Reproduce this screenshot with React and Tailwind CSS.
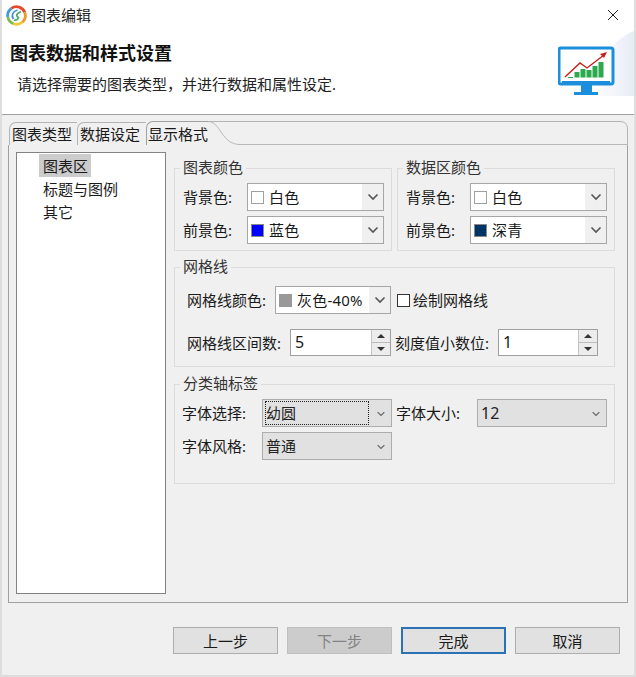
function Chevron({ className }) {
  return (
    <svg className={className} width="12" height="8" viewBox="0 0 12 8" fill="none" stroke="currentColor">
      <path d="M1.5 1.5L6 6L10.5 1.5" strokeWidth="1.6" />
    </svg>
  );
}

function ColorCombo({ swatch, label, className }) {
  return (
    <div className={`flex items-stretch h-[28px] border border-[#a6a6a6] bg-white ${className}`}>
      <div className="flex flex-1 items-center pl-[3px] min-w-0">
        <span className={`w-[13px] h-[13px] mr-[5px] border ${swatch}`}></span>
        <span className="whitespace-nowrap tracking-[0.2px]">{label}</span>
      </div>
      <div className="flex w-[21px] items-center justify-center bg-[#f0f0f0] text-[#555555]">
        <Chevron />
      </div>
    </div>
  );
}

function ColorRow({ text, swatch, label }) {
  return (
    <div className="flex items-center">
      <span className="w-[64px] whitespace-nowrap">{text}</span>
      <ColorCombo swatch={swatch} label={label} className="w-[137px]" />
    </div>
  );
}

function Spinner({ value, className }) {
  return (
    <div className={`flex items-stretch h-[27px] border border-[#a0a0a0] bg-white ${className}`}>
      <span className="flex-1 pl-[4px] text-[16px] leading-[25px]">{value}</span>
      <div className="flex flex-col w-[19px] border-l border-[#c4c4c4] bg-[#ececec]">
        <div className="flex flex-1 items-center justify-center border-b border-[#bcbcbc]">
          <svg width="8" height="4" viewBox="0 0 8 4"><path d="M4 0L8 4H0z" fill="#333333" /></svg>
        </div>
        <div className="flex flex-1 items-center justify-center">
          <svg width="8" height="4" viewBox="0 0 8 4"><path d="M0 0H8L4 4z" fill="#333333" /></svg>
        </div>
      </div>
    </div>
  );
}

function Select({ value, focused, className }) {
  return (
    <div className={`relative flex items-center h-[28px] border border-[#adadad] bg-[#e1e1e1] ${className}`}>
      <span className="pl-[3px] text-[#222222]">{value}</span>
      {focused && <span className="absolute left-[2px] top-[1px] w-[104px] h-[24px] border border-dotted border-[#222222]"></span>}
      <Chevron className="absolute right-[4px] top-[10px] text-[#666666] scale-75" />
    </div>
  );
}

function Group({ title, className, children }) {
  return (
    <fieldset className={`border border-[#dcdcdc] ${className}`}>
      <legend className="ml-[5px] px-[3px] leading-[20px] text-[#333333]">
        <span className="relative -top-px">{title}</span>
      </legend>
      {children}
    </fieldset>
  );
}

function FooterButton({ children, className }) {
  return (
    <button className={`flex w-[105px] h-[27px] items-center justify-center border ${className}`}>
      {children}
    </button>
  );
}

export default function App() {
  return (
    <div className="flex flex-col w-[636px] h-[677px] overflow-hidden border-x-2 border-b-2 border-[#dedede] bg-[#f0f0f0] text-[15px] leading-[20px] text-[#1a1a1a] font-['Noto_Sans','Noto_Sans_CJK_SC',sans-serif]">
      {/* title bar */}
      <div className="flex h-[30px] items-center justify-between bg-white pl-[4px] pr-[15px]">
        <div className="flex items-center">
          <svg width="21" height="21" viewBox="0 0 21 21" fill="none">
            <path d="M1.83 12.03A8.8 8.8 0 0 1 5.45 3.3" stroke="#3f9bd6" strokeWidth="2.8" />
            <path d="M5.45 3.3A8.8 8.8 0 0 1 18.77 7.5" stroke="#e6492e" strokeWidth="2.8" />
            <path d="M18.77 7.5A8.8 8.8 0 0 1 16.16 17.24" stroke="#f09a2e" strokeWidth="2.8" />
            <path d="M16.16 17.24A8.8 8.8 0 0 1 7.5 18.77" stroke="#eecb35" strokeWidth="2.8" />
            <path d="M7.5 18.77A8.8 8.8 0 0 1 1.83 12.03" stroke="#7dbb4a" strokeWidth="2.8" />
            <path d="M11.5 5C6.5 6.5 5 10.5 7.5 14" stroke="#4a8fd0" strokeWidth="1.8" />
            <path d="M15 6.5C11 8.5 9 10.5 12.5 12.5C11.5 15 9.5 15.5 8 15" stroke="#49ad6a" strokeWidth="1.7" />
          </svg>
          <span className="ml-[4px] text-[#222222]">图表编辑</span>
        </div>
        <svg width="12" height="12" viewBox="0 0 12 12" stroke="#222222" strokeWidth="1">
          <path d="M1 1L11 11M11 1L1 11" />
        </svg>
      </div>

      {/* banner */}
      <div className="flex h-[85px] justify-between border-b border-[#a0a0a0] bg-white pl-[8px]">
        <div>
          <h1 className="mt-[12px] text-[18px] leading-[22px] font-bold text-[#111111]">图表数据和样式设置</h1>
          <p className="mt-[10px] ml-[7px] text-[#222222]">请选择需要的图表类型，并进行数据和属性设定.</p>
        </div>
        <svg width="76" height="66" viewBox="558 30 76 66" className="shrink-0">
          <defs>
            <linearGradient id="fade" x1="0" x2="1" y1="0" y2="0">
              <stop offset="0" stopColor="#ffffff" />
              <stop offset="1" stopColor="#e8ecf6" />
            </linearGradient>
          </defs>
          <path d="M592 96C596 62 612 40 634 31V96z" fill="url(#fade)" />
          <rect x="559" y="48" width="54" height="36" rx="2" fill="#ffffff" stroke="#1b8fdc" strokeWidth="3" />
          <path d="M562 81H610V84H562z" fill="#1b8fdc" />
          <path d="M581 85H592V92H598V95H574V92H581z" fill="#1b8fdc" />
          <path d="M568 77H573V78H568z" fill="#2da94f" />
          <path d="M574.5 72H579.5V77.5H574.5zM580.5 69H585.5V77.5H580.5zM586.5 70H591.5V77.5H586.5zM592.5 66H597.5V77.5H592.5zM598.5 62H603.5V77.5H598.5z" fill="#2da94f" />
          <path d="M565 77L580 63L587 68L604 55" fill="none" stroke="#c8201c" strokeWidth="1.4" />
          <path d="M607 52L600 54L604 58z" fill="#c8201c" />
        </svg>
      </div>

      {/* tab folder */}
      <div className="relative mt-[6px] ml-[6px] w-[620px]">
        <div className="flex h-[24px] items-end pl-[1px]">
          <div className="h-[23px] w-[68px] rounded-tl-[7px] border-l border-t border-[#b4b4b4] pl-[2px] leading-[23px] whitespace-nowrap">图表类型</div>
          <div className="h-[23px] w-[69px] rounded-tl-[7px] border-l border-t border-[#b4b4b4] pl-[2px] leading-[23px] whitespace-nowrap">数据设定</div>
          <div className="h-[24px] w-[62px] rounded-tl-[7px] border-l border-t border-[#a0a0a0] pl-[1px] leading-[24px] whitespace-nowrap z-10">显示格式</div>
        </div>
        {/* curve at the right end of the active tab and the folder's top edge */}
        <svg className="absolute left-0 top-0" width="620" height="25" viewBox="0 0 620 25" fill="none">
          <path d="M199 .5H612Q619.5 .5 619.5 8V25" stroke="#b4b4b4" />
          <path d="M197 .5H200C213 .5 213 23.5 232 23.5H620" stroke="#b8b8b8" />
        </svg>

        <div className="flex h-[458px] border-x border-b border-[#a0a0a0] pl-[7px] pt-[7px]">
          {/* tree */}
          <div className="flex flex-col w-[150px] h-[442px] border border-[#828282] bg-white pl-[22px] pt-[1px]">
            <div className="w-[52px] h-[23px] bg-[#cccccc] pl-[4px] leading-[25px]">图表区</div>
            <div className="h-[23px] pl-[4px] leading-[25px] whitespace-nowrap">标题与图例</div>
            <div className="h-[23px] pl-[4px] leading-[25px]">其它</div>
          </div>

          {/* settings */}
          <div className="flex flex-col w-[441px] ml-[8px] pt-[6px]">
            <div className="flex gap-[5px]">
              <Group title="图表颜色" className="w-[218px] h-[93px]">
                <div className="flex flex-col gap-[5px] pl-[8px] pt-[5px]">
                  <ColorRow text="背景色:" swatch="border-[#a0a0a0] bg-white" label="白色" />
                  <ColorRow text="前景色:" swatch="border-[#8a8a8a] bg-[#0000ff]" label="蓝色" />
                </div>
              </Group>
              <Group title="数据区颜色" className="w-[218px] h-[93px]">
                <div className="flex flex-col gap-[5px] pl-[8px] pt-[5px]">
                  <ColorRow text="背景色:" swatch="border-[#a0a0a0] bg-white" label="白色" />
                  <ColorRow text="前景色:" swatch="border-[#8a8a8a] bg-[#003366]" label="深青" />
                </div>
              </Group>
            </div>

            <Group title="网格线" className="mt-[6px] h-[110px]">
              <div className="flex items-center pl-[12px] pt-[9px]">
                <span className="w-[88px] whitespace-nowrap">网格线颜色:</span>
                <ColorCombo swatch="border-[#999999] bg-[#999999]" label="灰色-40%" className="w-[116px]" />
                <span className="ml-[6px] w-[13px] h-[13px] border border-[#333333] bg-white"></span>
                <span className="ml-[3px] whitespace-nowrap">绘制网格线</span>
              </div>
              <div className="flex items-center pl-[12px] pt-[15px]">
                <span className="w-[103px] whitespace-nowrap">网格线区间数:</span>
                <Spinner value="5" className="w-[101px]" />
                <span className="ml-[4px] w-[103px] whitespace-nowrap">刻度值小数位:</span>
                <Spinner value="1" className="w-[100px]" />
              </div>
            </Group>

            <Group title="分类轴标签" className="mt-[7px] h-[110px]">
              <div className="flex items-center pl-[7px] pt-[5px]">
                <span className="w-[80px] whitespace-nowrap">字体选择:</span>
                <Select value="幼圆" focused className="w-[130px]" />
                <span className="ml-[4px] w-[81px] whitespace-nowrap">字体大小:</span>
                <Select value="12" className="w-[130px] text-[16px]" />
              </div>
              <div className="flex items-center pl-[7px] pt-[5px]">
                <span className="w-[80px] whitespace-nowrap">字体风格:</span>
                <Select value="普通" className="w-[130px]" />
              </div>
            </Group>
          </div>
        </div>
      </div>

      {/* buttons */}
      <div className="flex gap-[9px] pt-[24px] pl-[171px]">
        <FooterButton className="border-[#adadad] bg-[#e1e1e1]">上一步</FooterButton>
        <FooterButton className="border-[#bfbfbf] bg-[#cccccc] text-[#838383]">下一步</FooterButton>
        <FooterButton className="border-2 border-[#2a72b5] bg-[#e1e1e1]">完成</FooterButton>
        <FooterButton className="border-[#adadad] bg-[#e1e1e1]">取消</FooterButton>
      </div>
    </div>
  );
}
